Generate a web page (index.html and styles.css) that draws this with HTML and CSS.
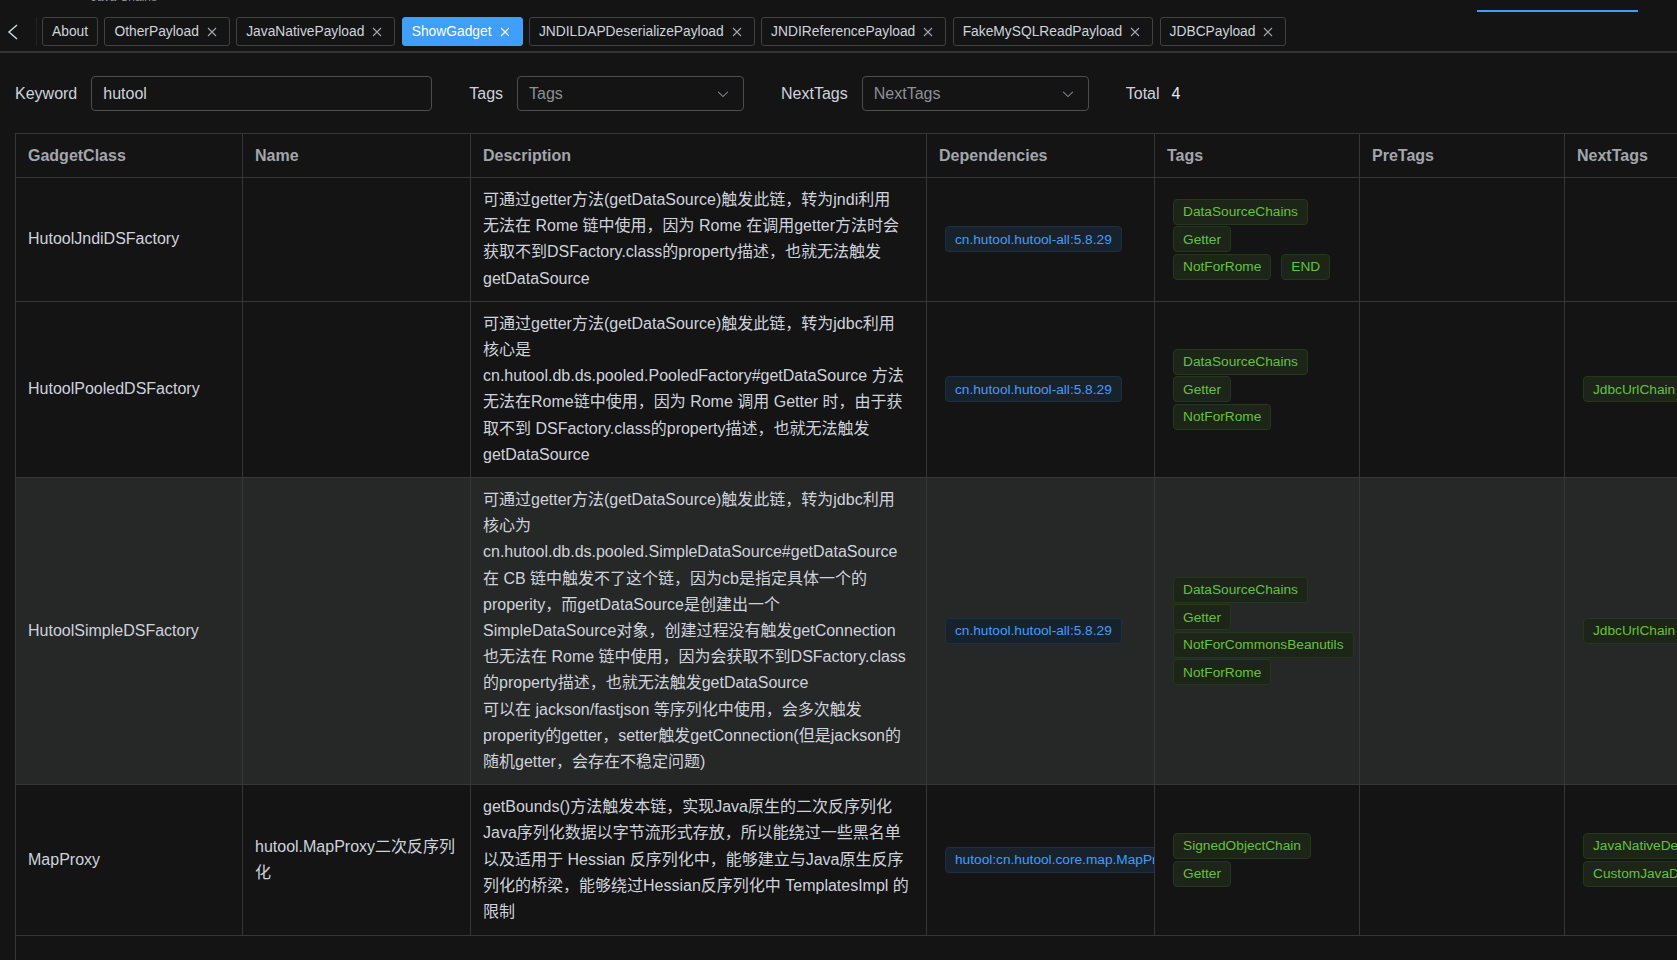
FILE: index.html
```html
<!DOCTYPE html>
<html lang="en">
<head>
    <meta charset="UTF-8">
    <meta name="viewport" content="width=device-width, initial-scale=1.0">
    <title>Java Chains - ShowGadget</title>
    <link rel="stylesheet" href="styles.css">
</head>
<body>
    <header class="topbar">
        <span class="brand">Java Chains</span>
        <span class="topbar-ink"></span>
    </header>

    <nav class="tabs-bar">
        <button class="tabs-prev">
            <svg width="16" height="16" viewBox="0 0 16 16"><polyline points="12,1 4,8 12,15" fill="none" stroke="#cfd3dc" stroke-width="1.5"/></svg>
        </button>
        <div class="tabs-list">
            <div class="tab">About</div>
            <div class="tab closable">OtherPayload<span class="tab-close"><svg width="14" height="14" viewBox="0 0 14 14"><path d="M3 3L11 11M11 3L3 11"/></svg></span></div>
            <div class="tab closable">JavaNativePayload<span class="tab-close"><svg width="14" height="14" viewBox="0 0 14 14"><path d="M3 3L11 11M11 3L3 11"/></svg></span></div>
            <div class="tab closable active">ShowGadget<span class="tab-close"><svg width="14" height="14" viewBox="0 0 14 14"><path d="M3 3L11 11M11 3L3 11"/></svg></span></div>
            <div class="tab closable">JNDILDAPDeserializePayload<span class="tab-close"><svg width="14" height="14" viewBox="0 0 14 14"><path d="M3 3L11 11M11 3L3 11"/></svg></span></div>
            <div class="tab closable">JNDIReferencePayload<span class="tab-close"><svg width="14" height="14" viewBox="0 0 14 14"><path d="M3 3L11 11M11 3L3 11"/></svg></span></div>
            <div class="tab closable">FakeMySQLReadPayload<span class="tab-close"><svg width="14" height="14" viewBox="0 0 14 14"><path d="M3 3L11 11M11 3L3 11"/></svg></span></div>
            <div class="tab closable">JDBCPayload<span class="tab-close"><svg width="14" height="14" viewBox="0 0 14 14"><path d="M3 3L11 11M11 3L3 11"/></svg></span></div>
        </div>
    </nav>

    <section class="filter">
        <div class="filter-item">
            <label class="filter-label">Keyword</label>
            <input class="input" type="text" value="hutool">
        </div>
        <div class="filter-item">
            <label class="filter-label">Tags</label>
            <div class="select">
                <span class="placeholder">Tags</span>
                <svg class="select-arrow" width="14" height="14" viewBox="0 0 1024 1024"><path d="M831.872 340.864 512 652.672 192.128 340.864a30.592 30.592 0 0 0-42.752 0 29.12 29.12 0 0 0 0 41.6L489.664 714.24a32 32 0 0 0 44.672 0l340.288-331.712a29.12 29.12 0 0 0 0-41.728 30.592 30.592 0 0 0-42.752 0z"/></svg>
            </div>
        </div>
        <div class="filter-item">
            <label class="filter-label">NextTags</label>
            <div class="select">
                <span class="placeholder">NextTags</span>
                <svg class="select-arrow" width="14" height="14" viewBox="0 0 1024 1024"><path d="M831.872 340.864 512 652.672 192.128 340.864a30.592 30.592 0 0 0-42.752 0 29.12 29.12 0 0 0 0 41.6L489.664 714.24a32 32 0 0 0 44.672 0l340.288-331.712a29.12 29.12 0 0 0 0-41.728 30.592 30.592 0 0 0-42.752 0z"/></svg>
            </div>
        </div>
        <div class="filter-item total">
            <span class="filter-label">Total</span>
            <span class="total-num">4</span>
        </div>
    </section>

    <div class="table-wrap">
        <div class="table">
            <div class="row head">
                <div class="cell">GadgetClass</div>
                <div class="cell">Name</div>
                <div class="cell">Description</div>
                <div class="cell">Dependencies</div>
                <div class="cell">Tags</div>
                <div class="cell">PreTags</div>
                <div class="cell">NextTags</div>
            </div>

            <div class="row">
                <div class="cell">HutoolJndiDSFactory</div>
                <div class="cell"></div>
                <div class="cell"><div class="desc">可通过getter方法(getDataSource)触发此链，转为jndi利用<br>无法在 Rome 链中使用，因为 Rome 在调用getter方法时会<br>获取不到DSFactory.class的property描述，也就无法触发<br>getDataSource</div></div>
                <div class="cell"><div class="tags single"><span class="tag tag-primary">cn.hutool.hutool-all:5.8.29</span></div></div>
                <div class="cell"><div class="tags">
                    <span class="tag tag-success">DataSourceChains</span>
                    <span class="tag tag-success">Getter</span>
                    <span class="tag tag-success">NotForRome</span>
                    <span class="tag tag-success">END</span>
                </div></div>
                <div class="cell"></div>
                <div class="cell"></div>
            </div>

            <div class="row">
                <div class="cell">HutoolPooledDSFactory</div>
                <div class="cell"></div>
                <div class="cell"><div class="desc">可通过getter方法(getDataSource)触发此链，转为jdbc利用<br>核心是<br>cn.hutool.db.ds.pooled.PooledFactory#getDataSource 方法<br>无法在Rome链中使用，因为 Rome 调用 Getter 时，由于获<br>取不到 DSFactory.class的property描述，也就无法触发<br>getDataSource</div></div>
                <div class="cell"><div class="tags single"><span class="tag tag-primary">cn.hutool.hutool-all:5.8.29</span></div></div>
                <div class="cell"><div class="tags">
                    <span class="tag tag-success">DataSourceChains</span>
                    <span class="tag tag-success">Getter</span>
                    <span class="tag tag-success">NotForRome</span>
                </div></div>
                <div class="cell"></div>
                <div class="cell"><div class="tags"><span class="tag tag-success">JdbcUrlChain</span></div></div>
            </div>

            <div class="row hover">
                <div class="cell">HutoolSimpleDSFactory</div>
                <div class="cell"></div>
                <div class="cell"><div class="desc">可通过getter方法(getDataSource)触发此链，转为jdbc利用<br>核心为<br>cn.hutool.db.ds.pooled.SimpleDataSource#getDataSource<br>在 CB 链中触发不了这个链，因为cb是指定具体一个的<br>properity，而getDataSource是创建出一个<br>SimpleDataSource对象，创建过程没有触发getConnection<br>也无法在 Rome 链中使用，因为会获取不到DSFactory.class<br>的property描述，也就无法触发getDataSource<br>可以在 jackson/fastjson 等序列化中使用，会多次触发<br>properity的getter，setter触发getConnection(但是jackson的<br>随机getter，会存在不稳定问题)</div></div>
                <div class="cell"><div class="tags single"><span class="tag tag-primary">cn.hutool.hutool-all:5.8.29</span></div></div>
                <div class="cell"><div class="tags">
                    <span class="tag tag-success">DataSourceChains</span>
                    <span class="tag tag-success">Getter</span>
                    <span class="tag tag-success">NotForCommonsBeanutils</span>
                    <span class="tag tag-success">NotForRome</span>
                </div></div>
                <div class="cell"></div>
                <div class="cell"><div class="tags"><span class="tag tag-success">JdbcUrlChain</span></div></div>
            </div>

            <div class="row last">
                <div class="cell">MapProxy</div>
                <div class="cell"><div class="desc">hutool.MapProxy二次反序列<br>化</div></div>
                <div class="cell"><div class="desc">getBounds()方法触发本链，实现Java原生的二次反序列化<br>Java序列化数据以字节流形式存放，所以能绕过一些黑名单<br>以及适用于 Hessian 反序列化中，能够建立与Java原生反序<br>列化的桥梁，能够绕过Hessian反序列化中 TemplatesImpl 的<br>限制</div></div>
                <div class="cell"><div class="tags single"><span class="tag tag-primary">hutool:cn.hutool.core.map.MapProxy</span></div></div>
                <div class="cell"><div class="tags">
                    <span class="tag tag-success">SignedObjectChain</span>
                    <span class="tag tag-success">Getter</span>
                </div></div>
                <div class="cell"></div>
                <div class="cell"><div class="tags">
                    <span class="tag tag-success">JavaNativeDeserialize</span>
                    <span class="tag tag-success">CustomJavaDeserialize</span>
                </div></div>
            </div>

            <div class="table-rest"></div>
        </div>
    </div>
</body>
</html>
```

FILE: styles.css
```css
* {
    margin: 0;
    padding: 0;
    box-sizing: border-box;
}

html, body {
    height: 100%;
    overflow: hidden;
}

body {
    font-family: "Liberation Sans", "Noto Sans CJK SC", sans-serif;
    font-size: 16px;
    background-color: #141414;
    color: #cfd3dc;
}

/* top header, mostly scrolled out of view */
.topbar {
    display: flex;
    height: 17px;
}

.brand {
    margin-left: 91px;
    margin-top: -9px;
    font-size: 12px;
    line-height: 12px;
    color: #8d9095;
}

.topbar-ink {
    margin-left: auto;
    margin-right: 39px;
    margin-top: 10px;
    width: 161px;
    height: 2px;
    background: #409eff;
}

/* tabs */
.tabs-bar {
    display: flex;
    align-items: flex-start;
    padding-bottom: 5px;
    border-bottom: 2px solid #333;
}

.tabs-prev {
    width: 37px;
    height: 29px;
    display: flex;
    align-items: center;
    padding-left: 5px;
    background: none;
    border: none;
    border-right: 1px solid #222;
    cursor: pointer;
}

.tabs-list {
    display: flex;
    gap: 6.4px;
    margin-left: 5px;
}

.tab {
    height: 29px;
    display: flex;
    align-items: center;
    padding: 0 9px;
    border: 1px solid #414243;
    border-radius: 3px;
    font-size: 13.8px;
    color: #cfd3dc;
    white-space: nowrap;
    cursor: pointer;
}

.tab.closable {
    padding-right: 10px;
}

.tab-close {
    display: flex;
    width: 14px;
    height: 14px;
    margin-left: 6px;
}

.tab-close path {
    stroke: #a3a6ad;
    stroke-width: 1.1;
    fill: none;
}

.tab.active {
    background: #409eff;
    border-color: #409eff;
    color: #fff;
}

.tab.active .tab-close path {
    stroke: #fff;
}

/* filter row */
.filter {
    display: flex;
    align-items: center;
    gap: 37px;
    padding: 23px 15px 0;
    margin-bottom: 22px;
}

.filter-item {
    display: flex;
    align-items: center;
    gap: 14px;
}

.filter-label {
    font-size: 16px;
    color: #cfd3dc;
}

.input {
    width: 341px;
    height: 35px;
    padding: 0 11px;
    background: transparent;
    border: 1px solid #4c4d4f;
    border-radius: 4px;
    font-family: inherit;
    font-size: 16px;
    color: #cfd3dc;
    outline: none;
}

.select {
    width: 227px;
    height: 35px;
    display: flex;
    align-items: center;
    justify-content: space-between;
    padding: 0 13px 0 11px;
    border: 1px solid #4c4d4f;
    border-radius: 4px;
}

.placeholder {
    color: #8d9095;
}

.select-arrow {
    fill: #a3a6ad;
}

.total {
    gap: 12px;
}

.total-num {
    color: #e5eaf3;
}

/* table */
.table-wrap {
    margin-left: 15px;
    overflow: hidden;
}

.table {
    display: grid;
    grid-template-columns: 227px 228px 456px 228px 205px 205px 205px;
    width: max-content;
    border-left: 1px solid #363637;
    border-top: 1px solid #363637;
}

.row {
    display: contents;
}

.cell {
    display: flex;
    align-items: center;
    min-width: 0;
    padding: 9px 12px;
    line-height: 26.2px;
    border-right: 1px solid #363637;
    border-bottom: 1px solid #363637;
    overflow: hidden;
    white-space: nowrap;
}

.row.last .cell {
    padding-bottom: 10px;
}

.head .cell {
    padding: 8.5px 12px;
    line-height: 26px;
    font-weight: bold;
    color: #a3a6ad;
}

.row.hover .cell {
    background: #262727;
}

.table-rest {
    grid-column: 1 / -1;
    height: 120px;
}

.desc {
    white-space: nowrap;
}

.tags {
    display: flex;
    flex-wrap: wrap;
    gap: 1.5px 10px;
    width: 162px;
    margin-left: 6px;
}

.tags.single {
    width: auto;
    flex-wrap: nowrap;
}

.tag {
    display: inline-flex;
    align-items: center;
    flex-shrink: 0;
    height: 26px;
    padding: 0 9px;
    border: 1px solid;
    border-radius: 4px;
    font-size: 13.7px;
    line-height: 1;
    white-space: nowrap;
}

.tag-success {
    background: #1c2518;
    border-color: #25371c;
    color: #67c23a;
}

.tag-primary {
    background: #18222c;
    border-color: #1d3043;
    color: #409eff;
}
```
